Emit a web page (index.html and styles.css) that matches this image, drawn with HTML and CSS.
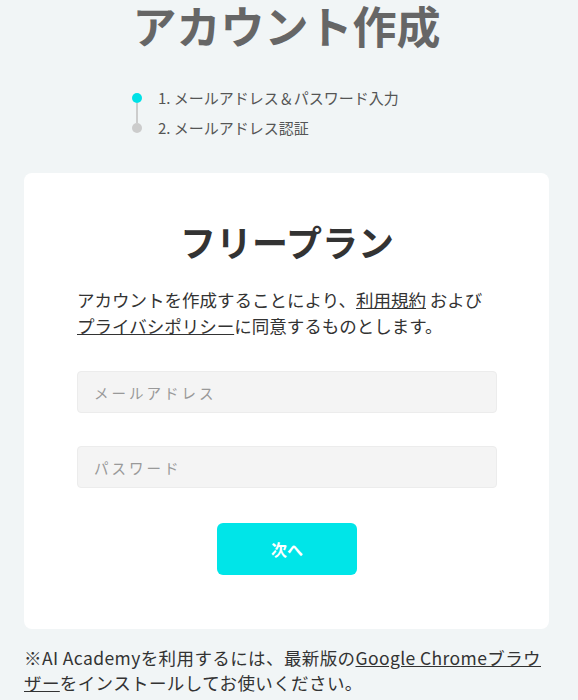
FILE: index.html
```html
<!DOCTYPE html>
<html lang="ja">
<head>
    <meta charset="UTF-8">
    <meta name="viewport" content="width=device-width, initial-scale=1.0">
    <title>アカウント作成</title>
    <link rel="stylesheet" href="styles.css">
</head>
<body>
    <div class="page">
        <h1 class="page-title">アカウント作成</h1>

        <ol class="steps">
            <li class="step active">1. メールアドレス＆パスワード入力</li>
            <li class="step">2. メールアドレス認証</li>
        </ol>

        <div class="card">
            <h2 class="plan">フリープラン</h2>
            <p class="agree">アカウントを作成することにより、<a href="#">利用規約</a> および<br><a href="#">プライバシポリシー</a>に同意するものとします。</p>

            <form class="form">
                <input class="field" type="email" placeholder="メールアドレス">
                <input class="field" type="password" placeholder="パスワード">
                <button class="next" type="button">次へ</button>
            </form>
        </div>

        <p class="note">※AI Academyを利用するには、最新版の<a href="#">Google Chromeブラウ<br>ザー</a>をインストールしてお使いください。</p>
    </div>
</body>
</html>
```

FILE: styles.css
```css
body {
    margin: 0;
    background-color: #f1f5f6;
    font-family: "Noto Sans CJK JP", "Noto Sans", sans-serif;
    color: #333;
}
.page {
    padding: 0 29px 0 24px;
}
.page-title {
    margin: 0;
    font-size: 44px;
    line-height: 50px;
    font-weight: 700;
    color: #666;
    text-align: center;
}
.steps {
    list-style: none;
    margin: 33px 0 0 108px;
    padding: 0;
}
.step {
    position: relative;
    padding-left: 26px;
    font-size: 15px;
    line-height: 30px;
    color: #555;
}
.step::before {
    content: "";
    position: absolute;
    left: 0;
    top: 10px;
    width: 10px;
    height: 10px;
    border-radius: 50%;
    background: #ccc;
}
.step.active::before {
    background: #00e1e6;
}
.step.active::after {
    content: "";
    position: absolute;
    left: 4px;
    top: 20px;
    width: 2px;
    height: 20px;
    background: #ccc;
}
.card {
    margin-top: 30px;
    background: #fff;
    border-radius: 8px;
    padding: 43px 52px 54px 53px;
}
.plan {
    margin: 0;
    font-size: 36px;
    line-height: 50px;
    font-weight: 700;
    color: #333;
    text-align: center;
}
.agree {
    margin: 21px 0 0;
    font-size: 17.5px;
    line-height: 26px;
    color: #333;
}
.agree a,
.note a {
    color: #333;
    text-decoration: underline;
}
.form {
    display: flex;
    flex-direction: column;
    margin-top: 32px;
}
.field {
    height: 42px;
    box-sizing: border-box;
    margin-bottom: 33px;
    padding: 0 16px;
    border: 1px solid #ececec;
    border-radius: 4px;
    background: #f4f4f4;
    font-family: inherit;
    font-size: 14.5px;
    letter-spacing: 3px;
    color: #333;
}
.field::placeholder {
    color: #999;
}
.next {
    align-self: center;
    width: 140px;
    height: 52px;
    margin-top: 2px;
    border: none;
    border-radius: 6px;
    background: #00e5e8;
    color: #fff;
    font-family: inherit;
    font-size: 16px;
    font-weight: 700;
    cursor: pointer;
}
.note {
    margin: 16px -10px 0 0;
    font-size: 17.5px;
    line-height: 25px;
    letter-spacing: 0.4px;
    color: #333;
}
```
